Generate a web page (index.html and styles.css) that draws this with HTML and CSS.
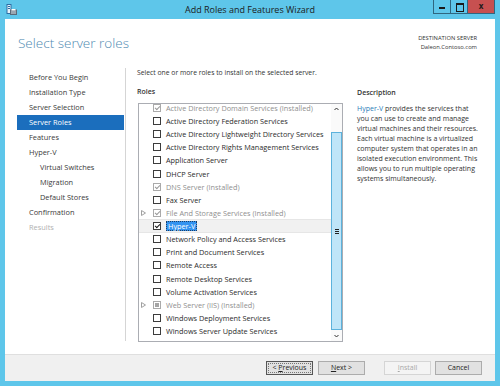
FILE: index.html
```html
<!DOCTYPE html>
<html lang="en">
<head>
    <meta charset="UTF-8">
    <meta name="viewport" content="width=device-width, initial-scale=1.0">
    <title>Add Roles and Features Wizard</title>
    <link rel="stylesheet" href="styles.css">
</head>
<body>
    <div class="window">
        <div class="titlebar">
            <svg class="app-icon" width="11" height="11" viewBox="0 0 11 11">
                <rect x="1" y="0.5" width="4" height="9" fill="#e8f4fb" stroke="#2d6da3"/>
                <line x1="2" y1="2.5" x2="4" y2="2.5" stroke="#2d6da3"/>
                <line x1="2" y1="4.5" x2="4" y2="4.5" stroke="#2d6da3"/>
                <rect x="4.5" y="6" width="6" height="4.5" fill="#9aa7b2" stroke="#5b6a78"/>
                <rect x="5.5" y="5" width="4" height="1.5" fill="#ffffff"/>
            </svg>
            <div class="title">Add Roles and Features Wizard</div>
            <div class="controls">
                <span class="ctl min"></span>
                <span class="ctl max"></span>
                <span class="ctl close">x</span>
            </div>
        </div>

        <div class="client">
            <div class="header">
                <h1>Select server roles</h1>
                <div class="dest">
                    <div>DESTINATION SERVER</div>
                    <div>Daleon.Contoso.com</div>
                </div>
            </div>

            <div class="body">
                <ul class="nav">
                    <li>Before You Begin</li>
                    <li>Installation Type</li>
                    <li>Server Selection</li>
                    <li class="on">Server Roles</li>
                    <li>Features</li>
                    <li>Hyper-V</li>
                    <li class="sub">Virtual Switches</li>
                    <li class="sub">Migration</li>
                    <li class="sub">Default Stores</li>
                    <li>Confirmation</li>
                    <li class="off">Results</li>
                </ul>

                <div class="main">
                    <p class="intro">Select one or more roles to install on the selected server.</p>
                    <div class="cols">
                        <div class="roles">
                            <div class="label">Roles</div>
                            <div class="listbox">
                                <div class="items">
                                    <div class="items-inner">
                                        <div class="row inst"><span class="exp"></span><span class="cb on"></span>Active Directory Domain Services (Installed)</div>
                                        <div class="row"><span class="exp"></span><span class="cb"></span>Active Directory Federation Services</div>
                                        <div class="row"><span class="exp"></span><span class="cb"></span>Active Directory Lightweight Directory Services</div>
                                        <div class="row"><span class="exp"></span><span class="cb"></span>Active Directory Rights Management Services</div>
                                        <div class="row"><span class="exp"></span><span class="cb"></span>Application Server</div>
                                        <div class="row"><span class="exp"></span><span class="cb"></span>DHCP Server</div>
                                        <div class="row inst"><span class="exp"></span><span class="cb on"></span>DNS Server (Installed)</div>
                                        <div class="row"><span class="exp"></span><span class="cb"></span>Fax Server</div>
                                        <div class="row inst"><span class="exp"><svg width="5" height="6" viewBox="0 0 5 6"><polygon points="0.5,0.5 4.5,3 0.5,5.5" fill="none" stroke="#a0a0a0"/></svg></span><span class="cb on"></span>File And Storage Services (Installed)</div>
                                        <div class="row sel"><span class="exp"></span><span class="cb on"></span><span class="hl">Hyper-V</span></div>
                                        <div class="row"><span class="exp"></span><span class="cb"></span>Network Policy and Access Services</div>
                                        <div class="row"><span class="exp"></span><span class="cb"></span>Print and Document Services</div>
                                        <div class="row"><span class="exp"></span><span class="cb"></span>Remote Access</div>
                                        <div class="row"><span class="exp"></span><span class="cb"></span>Remote Desktop Services</div>
                                        <div class="row"><span class="exp"></span><span class="cb"></span>Volume Activation Services</div>
                                        <div class="row inst"><span class="exp"><svg width="5" height="6" viewBox="0 0 5 6"><polygon points="0.5,0.5 4.5,3 0.5,5.5" fill="none" stroke="#a0a0a0"/></svg></span><span class="cb part"></span>Web Server (IIS) (Installed)</div>
                                        <div class="row"><span class="exp"></span><span class="cb"></span>Windows Deployment Services</div>
                                        <div class="row"><span class="exp"></span><span class="cb"></span>Windows Server Update Services</div>
                                    </div>
                                </div>
                                <div class="scrollbar">
                                    <div class="sb-btn">
                                        <svg width="5" height="4" viewBox="0 0 5 4"><polyline points="0.5,3 2.5,1 4.5,3" fill="none" stroke="#333"/></svg>
                                    </div>
                                    <div class="sb-track"></div>
                                    <div class="sb-thumb"><span class="grip"></span></div>
                                    <div class="sb-btn down">
                                        <svg width="5" height="4" viewBox="0 0 5 4"><polyline points="0.5,1 2.5,3 4.5,1" fill="none" stroke="#333"/></svg>
                                    </div>
                                </div>
                            </div>
                        </div>

                        <div class="desc">
                            <div class="label">Description</div>
                            <p><span class="link">Hyper-V</span> provides the services that<br>you can use to create and manage<br>virtual machines and their resources.<br>Each virtual machine is a virtualized<br>computer system that operates in an<br>isolated execution environment. This<br>allows you to run multiple operating<br>systems simultaneously.</p>
                        </div>
                    </div>
                </div>
            </div>

            <div class="footer">
                <button class="btn default">&lt; <u>P</u>revious</button>
                <button class="btn"><u>N</u>ext &gt;</button>
                <button class="btn install" disabled><u>I</u>nstall</button>
                <button class="btn">Cancel</button>
            </div>
        </div>
    </div>
</body>
</html>
```

FILE: styles.css
```css
*{box-sizing: border-box;}
html, body{
    margin: 0;
    padding: 0;
}
body{
    background: #5ec6ea;
    font-family: "Open Sans", "Noto Sans", sans-serif;
    color: #333;
}
.window{
    display: flex;
    flex-direction: column;
    width: 500px;
    height: 386px;
    background: #5ec6ea;
}

/* title bar */
.titlebar{
    display: grid;
    grid-template-columns: 1fr auto 1fr;
    height: 19px;
}
.app-icon{
    margin: 4px 0 0 6px;
}
.title{
    font-size: 9px;
    line-height: 19px;
    color: #1b1b1b;
}
.controls{
    display: flex;
    justify-self: end;
    margin-right: 5px;
    height: 14px;
}
.ctl{
    position: relative;
    width: 17px;
    height: 14px;
    border: 1px solid #2f6680;
    border-top: 0;
    border-right: 0;
}
.ctl.min::after{
    content: "";
    position: absolute;
    left: 5px;
    top: 7px;
    width: 6px;
    height: 2px;
    background: #1a1a1a;
}
.ctl.max::after{
    content: "";
    position: absolute;
    left: 5px;
    top: 3px;
    width: 6px;
    height: 6px;
    border: 1px solid #1a1a1a;
    border-top-width: 2px;
}
.ctl.close{
    width: 28px;
    background: #c75050;
    border-right: 1px solid #2f6680;
    font-size: 8px;
    font-weight: bold;
    line-height: 11px;
    text-align: center;
    color: #1a1a1a;
}

/* client area */
.client{
    display: flex;
    flex-direction: column;
    flex: 1;
    margin: 0 5px 5px;
    background: #fff;
}
.header{
    display: flex;
    justify-content: space-between;
    height: 45px;
    padding: 0 18px 0 13px;
}
.header h1{
    margin: 0;
    padding-top: 15px;
    font-size: 13.5px;
    font-weight: 300;
    line-height: 18px;
    color: #4f8ab2;
}
.dest{
    padding-top: 15px;
    font-size: 5.8px;
    line-height: 8.5px;
    text-align: right;
    color: #333;
}

.body{
    display: flex;
    flex: 1;
    padding-left: 12px;
}
.nav{
    width: 109px;
    height: 273px;
    margin: 4px 0 0;
    padding: 1.5px 0 0;
    list-style: none;
    border-right: 1px solid #d5d5d5;
}
.nav li{
    height: 15px;
    margin-right: 1px;
    padding-left: 12px;
    font-size: 7.4px;
    line-height: 15px;
    color: #3a3a3a;
}
.nav li.sub{
    padding-left: 23px;
}
.nav li.on{
    background: #1b6ebd;
    color: #fff;
}
.nav li.off{
    color: #b0b0b0;
}

.main{
    flex: 1;
    margin-left: 11px;
    padding-top: 4px;
}
.intro{
    margin: 0;
    font-size: 6.8px;
    line-height: 10px;
}
.cols{
    display: flex;
    margin-top: 9px;
}
.label{
    font-size: 7px;
    font-weight: 600;
    line-height: 10px;
    color: #333;
}
.listbox{
    display: flex;
    width: 205px;
    height: 239px;
    margin: 6px 0 0 1px;
    border: 1px solid #abadb3;
}
.items{
    flex: 1;
    overflow: hidden;
}
.items-inner{
    margin-top: -2.7px;
}
.row{
    display: flex;
    align-items: center;
    height: 13.125px;
    padding-left: 2px;
    font-size: 7.3px;
    white-space: nowrap;
    color: #2b2b2b;
}
.row.inst{
    color: #8f8f8f;
}
.row.sel{
    background: #f1f1f1;
    border-top: 1px solid #e6e6e6;
    border-bottom: 1px solid #e6e6e6;
}
.exp{
    display: flex;
    align-items: center;
    width: 12px;
    height: 6px;
}
.cb{
    position: relative;
    flex: none;
    width: 8px;
    height: 8px;
    margin-right: 5px;
    border: 1px solid #3c3c3c;
    background: #fff;
}
.row.inst .cb{
    border-color: #aaa;
}
.cb.on::after{
    content: "";
    position: absolute;
    left: 2px;
    top: 0;
    width: 2px;
    height: 4px;
    border: solid #1a1a1a;
    border-width: 0 1px 1px 0;
    transform: rotate(45deg);
}
.row.inst .cb.on::after{
    border-color: #9a9a9a;
}
.cb.part::after{
    content: "";
    position: absolute;
    left: 1px;
    top: 1px;
    width: 4px;
    height: 4px;
    background: #a5a5a5;
}
.hl{
    display: inline-block;
    height: 10px;
    padding: 0 1px;
    border: 1px dotted #1d3f66;
    background: #3393f0;
    color: #fff;
    line-height: 8px;
}

.scrollbar{
    display: flex;
    flex-direction: column;
    width: 11px;
    background: #fafafa;
}
.sb-btn{
    display: flex;
    align-items: center;
    justify-content: center;
    height: 10px;
}
.sb-track{
    height: 18px;
}
.sb-thumb{
    display: flex;
    align-items: center;
    justify-content: center;
    height: 198px;
    margin-bottom: 1px;
    border: 1px solid #5cb2dc;
    background: #bfe5f8;
}
.grip{
    width: 4px;
    height: 5px;
    border-top: 1px solid #222;
    border-bottom: 1px solid #222;
    background: linear-gradient(#222, #222) center / 4px 1px no-repeat;
}

.desc{
    margin-left: 14px;
    padding-top: 1px;
}
.desc p{
    margin: 6px 0 0;
    font-size: 7px;
    line-height: 10px;
    white-space: nowrap;
    color: #333;
}
.link{
    color: #2a7cb8;
}

/* buttons */
.footer{
    display: flex;
    justify-content: flex-end;
    align-items: flex-start;
    height: 27px;
    padding: 6px 13px 0 0;
    background: #f0f0f0;
    border-top: 1px solid #dfdfdf;
}
.btn{
    width: 47px;
    height: 14px;
    margin-left: 5px;
    padding: 0;
    border: 1px solid #acacac;
    background: #e1e1e1;
    font-family: "Open Sans", "Noto Sans", sans-serif;
    font-size: 7px;
    line-height: 12px;
    color: #222;
}
.btn.default{
    border-color: #555;
    outline: 1px dotted #777;
    outline-offset: -3px;
}
.btn.install{
    margin-left: 19px;
    background: #f4f4f4;
    border-color: #d5d5d5;
    color: #a8a8a8;
}
.btn.install + .btn{
    margin-left: 4px;
}
```
